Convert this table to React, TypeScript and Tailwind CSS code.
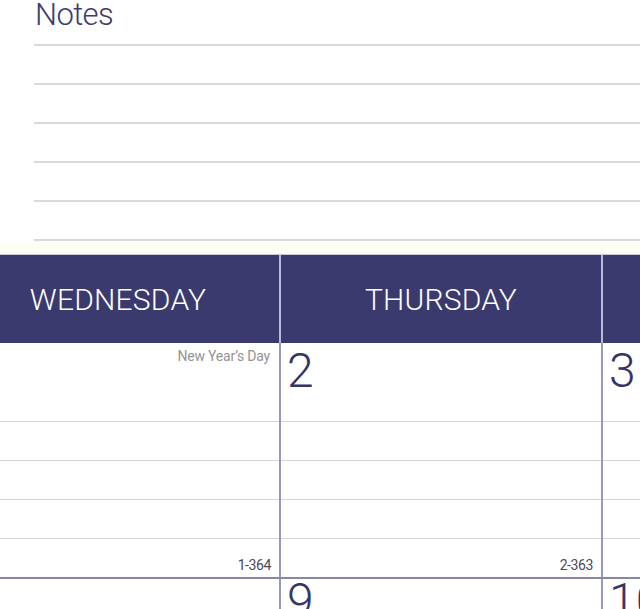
import React from "react";

type Day = { num: string; holiday?: string; count?: string; w: string };

const headers = [
  { t: "WEDNESDAY", w: "w-[324px]" },
  { t: "THURSDAY", w: "w-[322px]" },
  { t: "FRIDAY", w: "w-[322px]" },
];
const week1: Day[] = [
  { num: "1", holiday: "New Year\u2019s Day", count: "1-364", w: "w-[324px]" },
  { num: "2", count: "2-363", w: "w-[322px]" },
  { num: "3", count: "3-362", w: "w-[322px]" },
];
const week2: Day[] = [
  { num: "8", w: "w-[324px]" },
  { num: "9", w: "w-[322px]" },
  { num: "10", w: "w-[322px]" },
];

function WeekCell({ day }: { day: Day }) {
  return (
    <div className={`${day.w} shrink-0 border-r-2 border-[#9898be] flex flex-col`}>
      <div className="h-[78px] relative">
        <div className="pl-[6px] pt-[4px] text-[48px] leading-none font-light text-[#35356a]">
          {day.num}
        </div>
        {day.holiday && (
          <div className="absolute right-[9px] top-[5px] text-[14px] leading-[16px] text-[#939393] tracking-[-0.2px]">
            {day.holiday}
          </div>
        )}
      </div>
      <div className="h-[39px] border-t border-[#d3d3da]" />
      <div className="h-[39px] border-t border-[#d3d3da]" />
      <div className="h-[39px] border-t border-[#d3d3da]" />
      <div className="h-[39px] border-t border-[#d3d3da] flex items-end justify-end pr-[8px] pb-[5px]">
        <span className="text-[14px] leading-none text-[#4a4a5a] tracking-[-0.4px]">{day.count}</span>
      </div>
    </div>
  );
}

function Week2Cell({ day }: { day: Day }) {
  return (
    <div className={`${day.w} shrink-0 border-r-2 border-[#9898be] h-[60px]`}>
      <div className="pl-[6px] text-[48px] leading-[44px] font-light text-[#35356a]">{day.num}</div>
    </div>
  );
}

export default function App() {
  return (
    <div className="w-[640px] h-[609px] overflow-hidden bg-white [font-family:Roboto,'Liberation_Sans',sans-serif]">
      <section className="h-[254px] flex flex-col">
        <div className="h-[44px] pl-[35px] text-[31px] leading-[30px] font-light text-[#3d3c6c] tracking-[-0.6px]">
          Notes
        </div>
        <div className="ml-[34px]">
          {[0, 1, 2, 3, 4].map((i) => (
            <div key={i} className="h-[39px] border-t-2 border-[#d9d9d9]" />
          ))}
          <div className="h-[2px] bg-[#d9d9d9]" />
        </div>
        <div className="flex-1 bg-[#fdfdf4]" />
      </section>

      <div className="flex h-[89px] ml-[-43px] bg-[#3b3a6e] border-t border-[#c8c8dc]">
        {headers.map((h) => (
          <div
            key={h.t}
            className={`${h.w} shrink-0 border-r-2 border-[#b9b9d6] flex items-center justify-center text-white text-[30px] font-light tracking-[0.2px]`}
          >
            {h.t}
          </div>
        ))}
      </div>

      <div className="flex ml-[-43px] border-b-2 border-[#8787a6]">
        {week1.map((d) => (
          <WeekCell key={d.num} day={d} />
        ))}
      </div>

      <div className="flex ml-[-43px]">
        {week2.map((d) => (
          <Week2Cell key={d.num} day={d} />
        ))}
      </div>
    </div>
  );
}
